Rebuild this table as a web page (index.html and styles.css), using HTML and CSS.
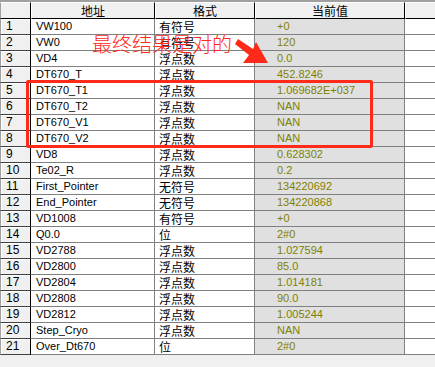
FILE: index.html
```html
<!DOCTYPE html>
<html>
<head>
<meta charset="utf-8">
<link rel="stylesheet" href="styles.css">
</head>
<body>
<div class="frame">
<table class="grid">
<colgroup><col class="c1"><col class="c2"><col class="c3"><col class="c4"><col class="c5"></colgroup>
<thead>
<tr><th class="hidx"></th><th>地址</th><th>格式</th><th>当前值</th><th class="hlast"></th></tr>
</thead>
<tbody>
<tr><td class="idx">1</td><td class="addr">VW100</td><td class="fmt">有符号</td><td class="val">+0</td><td class="last"></td></tr>
<tr><td class="idx">2</td><td class="addr">VW0</td><td class="fmt">有符号</td><td class="val">120</td><td class="last"></td></tr>
<tr><td class="idx">3</td><td class="addr">VD4</td><td class="fmt">浮点数</td><td class="val">0.0</td><td class="last"></td></tr>
<tr><td class="idx">4</td><td class="addr">DT670_T</td><td class="fmt">浮点数</td><td class="val">452.8246</td><td class="last"></td></tr>
<tr><td class="idx">5</td><td class="addr">DT670_T1</td><td class="fmt">浮点数</td><td class="val">1.069682E+037</td><td class="last"></td></tr>
<tr><td class="idx">6</td><td class="addr">DT670_T2</td><td class="fmt">浮点数</td><td class="val">NAN</td><td class="last"></td></tr>
<tr><td class="idx">7</td><td class="addr">DT670_V1</td><td class="fmt">浮点数</td><td class="val">NAN</td><td class="last"></td></tr>
<tr><td class="idx">8</td><td class="addr">DT670_V2</td><td class="fmt">浮点数</td><td class="val">NAN</td><td class="last"></td></tr>
<tr><td class="idx">9</td><td class="addr">VD8</td><td class="fmt">浮点数</td><td class="val">0.628302</td><td class="last"></td></tr>
<tr><td class="idx">10</td><td class="addr">Te02_R</td><td class="fmt">浮点数</td><td class="val">0.2</td><td class="last"></td></tr>
<tr><td class="idx">11</td><td class="addr">First_Pointer</td><td class="fmt">无符号</td><td class="val">134220692</td><td class="last"></td></tr>
<tr><td class="idx">12</td><td class="addr">End_Pointer</td><td class="fmt">无符号</td><td class="val">134220868</td><td class="last"></td></tr>
<tr><td class="idx">13</td><td class="addr">VD1008</td><td class="fmt">有符号</td><td class="val">+0</td><td class="last"></td></tr>
<tr><td class="idx">14</td><td class="addr">Q0.0</td><td class="fmt">位</td><td class="val">2#0</td><td class="last"></td></tr>
<tr><td class="idx">15</td><td class="addr">VD2788</td><td class="fmt">浮点数</td><td class="val">1.027594</td><td class="last"></td></tr>
<tr><td class="idx">16</td><td class="addr">VD2800</td><td class="fmt">浮点数</td><td class="val">85.0</td><td class="last"></td></tr>
<tr><td class="idx">17</td><td class="addr">VD2804</td><td class="fmt">浮点数</td><td class="val">1.014181</td><td class="last"></td></tr>
<tr><td class="idx">18</td><td class="addr">VD2808</td><td class="fmt">浮点数</td><td class="val">90.0</td><td class="last"></td></tr>
<tr><td class="idx">19</td><td class="addr">VD2812</td><td class="fmt">浮点数</td><td class="val">1.005244</td><td class="last"></td></tr>
<tr><td class="idx">20</td><td class="addr">Step_Cryo</td><td class="fmt">浮点数</td><td class="val">NAN</td><td class="last"></td></tr>
<tr><td class="idx">21</td><td class="addr">Over_Dt670</td><td class="fmt">位</td><td class="val">2#0</td><td class="last"></td></tr>
</tbody>
</table>
<div class="note">最终结果是对的</div>
<svg class="arrow" width="60" height="40" viewBox="0 0 60 40">
<polygon points="12,6 27,16 30,9 42,30 17,30 23,22 9,11" fill="#ff2a1a"/>
</svg>
<div class="hilite"></div>
</div>
</body>
</html>
```

FILE: styles.css
```css
html, body {
  margin: 0;
  padding: 0;
}
body {
  background: #f0f0f0;
  width: 435px;
  height: 367px;
  overflow: hidden;
  font-family: "Liberation Sans", "Noto Sans CJK SC", sans-serif;
}
.frame {
  position: relative;
  border-top: 2px solid #a0a0a0;
}
.grid {
  border-collapse: separate;
  border-spacing: 0;
  table-layout: fixed;
  width: 435px;
}
.c1 { width: 31px; }
.c2 { width: 124px; }
.c3 { width: 100px; }
.c4 { width: 150px; }
.c5 { width: 30px; }
.grid th {
  height: 15px;
  padding: 0;
  background: #f0f0f0;
  border-top: 1px solid #ffffff;
  border-left: 1px solid #ffffff;
  border-right: 1px solid #000000;
  border-bottom: 1px solid #000000;
  font-family: "Noto Sans CJK SC", sans-serif;
  font-weight: normal;
  font-size: 12px;
  line-height: 15px;
  color: #000;
  text-align: center;
  box-sizing: content-box;
}
.grid th.hidx {
  border-left: 1px solid #a0a0a0;
}
.grid th.hlast {
  border-right: none;
}
.grid td {
  height: 15px;
  padding: 0;
  border-right: 1px solid #808080;
  border-bottom: 1px solid #808080;
  font-size: 11px;
  line-height: 15px;
  color: #000;
  white-space: nowrap;
  overflow: hidden;
  background: #ffffff;
}
.grid td.idx {
  background: #f0f0f0;
  border-left: 1px solid #a0a0a0;
  border-right: 1px solid #000000;
  border-bottom: 1px solid #404040;
  box-shadow: inset 1px 1px 0 #ffffff;
  padding-left: 5px;
  font-size: 12px;
}
.grid td.addr {
  padding-left: 5px;
}
.grid td.fmt {
  padding-left: 4px;
  font-family: "Noto Sans CJK SC", sans-serif;
  font-size: 12px;
}
.grid td.val {
  background: #e0e0e0;
  color: #808000;
  padding-left: 22px;
}
.grid td.last {
  border-right: none;
}
.note {
  position: absolute;
  left: 92px;
  top: 31px;
  font-family: "Noto Sans CJK SC", sans-serif;
  font-weight: 300;
  font-size: 20px;
  line-height: 22px;
  color: #ff2a1a;
}
.arrow {
  position: absolute;
  left: 226px;
  top: 31px;
}
.hilite {
  position: absolute;
  left: 26px;
  top: 78px;
  width: 341px;
  height: 62px;
  border: 3px solid #ff2a1a;
  border-radius: 2px;
}
```
